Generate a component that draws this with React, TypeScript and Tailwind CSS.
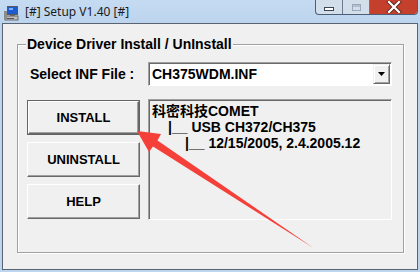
import React from 'react';

const ui = { fontFamily: '"Liberation Sans", Arial, "Noto Sans CJK SC", sans-serif' };

const TitleIcon: React.FC = () => (
    <svg width="16" height="16" viewBox="0 0 16 16">
        <rect x="3" y="1" width="11" height="9" fill="#5a5a5a" />
        <rect x="4" y="2" width="9" height="7" fill="#1e5bd0" />
        <rect x="5" y="3" width="4" height="2" fill="#7fb0ff" />
        <rect x="6" y="10" width="5" height="1" fill="#7a7a7a" />
        <rect x="1" y="11" width="13" height="4" fill="#bdbdbd" stroke="#555" strokeWidth="0.8" />
        <rect x="0" y="6" width="3" height="9" fill="#8c8c8c" />
        <rect x="3" y="13" width="7" height="1" fill="#555" />
    </svg>
);

const Win32Button: React.FC<{ label: string; isDefault?: boolean }> = ({ label, isDefault }) => (
    <button
        className={
            isDefault
                ? 'h-[35px] w-full border border-[#646464] bg-[#f0f0f0] p-0'
                : 'h-[35px] w-full border-0 bg-[#f0f0f0] p-0'
        }
    >
        <div className="flex h-full w-full items-center justify-center border border-t-white border-l-white border-r-[#696969] border-b-[#696969] shadow-[inset_-1px_-1px_0_#a0a0a0] text-[13px] font-bold text-black">
            {label}
        </div>
    </button>
);

export default function App() {
    return (
        <div className="relative flex h-[272px] w-[420px] flex-col overflow-hidden bg-[#bcd4ee]" style={ui}>
            {/* title bar */}
            <div className="flex h-[23px] shrink-0 items-start bg-gradient-to-b from-[#c5dbf2] to-[#bcd4ee]">
                <div className="ml-[4px] mt-[5px]"><TitleIcon /></div>
                <div className="ml-[5px] mt-[3px] text-[12px] text-[#1b1b1b]" style={{ fontFamily: '"Noto Sans", "Open Sans", sans-serif' }}>
                    [#] Setup V1.40 [#]
                </div>
                <div className="ml-auto mr-[2px] flex h-[15px] shrink-0 rounded-b-[4px] border border-t-0 border-[#4d5d73] bg-[#d3deeb]">
                    <div className="flex h-full w-[27px] items-center justify-center border-r border-[#6b7a8f]">
                        <div className="mt-[3px] h-[4px] w-[10px] border border-[#3b4656] bg-white" />
                    </div>
                    <div className="flex h-full w-[27px] items-center justify-center border-r border-[#6b7a8f]">
                        <div className="h-[7px] w-[9px] border border-[#9aa8ba] shadow-[inset_0_2px_0_#b3bfcd]" />
                    </div>
                    <div className="flex h-full w-[47px] items-center justify-center rounded-br-[3px] bg-[#c43f2c]">
                        <svg width="16" height="12" viewBox="0 0 16 12">
                            <path d="M3 1 L13 11 M13 1 L3 11" stroke="#5a2a22" strokeWidth="4" strokeLinecap="square" />
                            <path d="M3 1 L13 11 M13 1 L3 11" stroke="#ffffff" strokeWidth="2.2" strokeLinecap="square" />
                        </svg>
                    </div>
                </div>
            </div>

            {/* client area */}
            <div className="mx-[2px] mb-[2px] flex-1 border border-[#5a6470] bg-[#f0f0f0] pl-[14px] pr-[13px] pt-[20px] pb-[16px]">
                <div className="relative h-full border border-[#a0a0a0] shadow-[1px_1px_0_#ffffff,inset_1px_1px_0_#ffffff] pl-[9px] pr-[10px] pt-[17px]">
                    <span className="absolute left-[8px] top-[-9px] bg-[#f0f0f0] px-[1px] text-[14px] font-bold leading-[16px] text-black">
                        Device Driver Install / UnInstall
                    </span>

                    <div className="flex items-center">
                        <div className="w-[121px] pl-[3px] text-[14px] font-bold text-black">Select INF File :</div>
                        <div className="flex h-[24px] w-[244px] items-center border border-t-[#a0a0a0] border-l-[#a0a0a0] border-r-white border-b-white bg-white shadow-[inset_1px_1px_0_#696969]">
                            <span className="ml-[3px] flex-1 text-[14px] font-bold text-black">CH375WDM.INF</span>
                            <div className="mr-[1px] flex h-[20px] w-[17px] items-center justify-center border border-t-[#f0f0f0] border-l-[#f0f0f0] border-r-[#696969] border-b-[#696969] bg-[#f0f0f0] shadow-[inset_1px_1px_0_#ffffff,inset_-1px_-1px_0_#a0a0a0]">
                                <svg width="7" height="4" viewBox="0 0 7 4"><path d="M0 0 H7 L3.5 4 Z" fill="#000" /></svg>
                            </div>
                        </div>
                    </div>

                    <div className="mt-[13px] flex gap-[8px]">
                        <div className="mt-[1px] flex w-[113px] flex-col gap-[7px]">
                            <Win32Button label="INSTALL" isDefault />
                            <Win32Button label="UNINSTALL" />
                            <Win32Button label="HELP" />
                        </div>
                        <div className="h-[121px] w-[244px] border border-t-[#a0a0a0] border-l-[#a0a0a0] border-r-white border-b-white shadow-[inset_1px_1px_0_#696969] pl-[3px] pt-[3px] text-[14px] font-bold leading-[16px] text-black">
                            <div>科密科技COMET</div>
                            <div className="ml-[16px]">|__ USB CH372/CH375</div>
                            <div className="ml-[33px]">|__ 12/15/2005, 2.4.2005.12</div>
                        </div>
                    </div>
                </div>
            </div>

            {/* red annotation arrow */}
            <svg className="pointer-events-none absolute left-0 top-0" width="420" height="272" viewBox="0 0 420 272">
                <polygon
                    points="137,131 161,134 157.5,140.5 313.5,248 153,146.5 149,152"
                    fill="#f5403a"
                />
            </svg>
        </div>
    );
}
